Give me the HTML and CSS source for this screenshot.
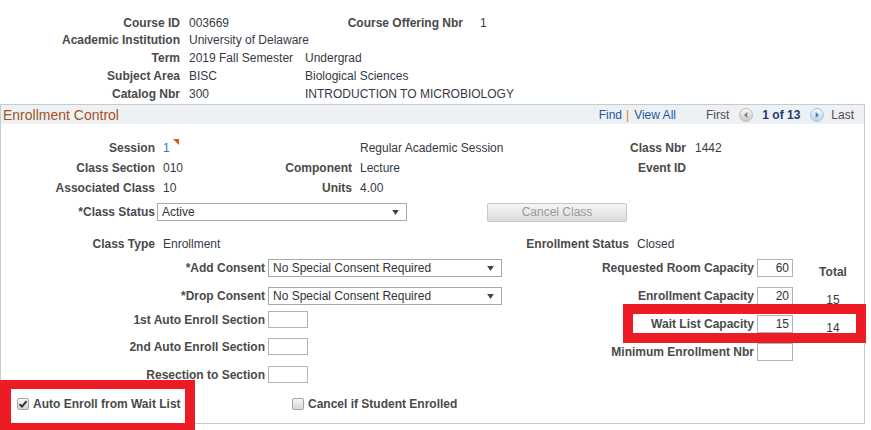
FILE: index.html
```html
<!DOCTYPE html>
<html>
<head>
<meta charset="utf-8">
<title>Enrollment Control</title>
<link rel="stylesheet" href="styles.css">
</head>
<body>
<div class="course">
  <div class="crow"><span class="lbl">Course ID</span><span class="val v1">003669</span><span class="lbl lbl2">Course Offering Nbr</span><span class="val v2">1</span></div>
  <div class="crow"><span class="lbl">Academic Institution</span><span class="val v1">University of Delaware</span></div>
  <div class="crow"><span class="lbl">Term</span><span class="val v1">2019 Fall Semester</span><span class="val">Undergrad</span></div>
  <div class="crow"><span class="lbl">Subject Area</span><span class="val v1">BISC</span><span class="val">Biological Sciences</span></div>
  <div class="crow"><span class="lbl">Catalog Nbr</span><span class="val v1">300</span><span class="val">INTRODUCTION TO MICROBIOLOGY</span></div>
</div>

<section class="panel">
  <div class="phead">
    <span class="ptitle">Enrollment Control</span>
    <nav class="pager">
      <span class="link">Find</span><span class="sep">|</span><span class="link">View All</span>
      <span class="first">First</span>
      <svg class="nav-ic" viewBox="0 0 14 14" width="14" height="14">
        <defs><linearGradient id="g1" x1="0" y1="0" x2="0" y2="1"><stop offset="0" stop-color="#fbfbfb"/><stop offset="1" stop-color="#c9c9c9"/></linearGradient></defs>
        <circle cx="7" cy="7" r="6.4" fill="url(#g1)" stroke="#b9b9b9" stroke-width="1"/>
        <polygon points="8.3,4 5,7 8.3,10" fill="#7d7d7d"/>
      </svg>
      <span class="count">1 of 13</span>
      <svg class="nav-ic" viewBox="0 0 14 14" width="14" height="14">
        <defs><linearGradient id="g2" x1="0" y1="0" x2="0" y2="1"><stop offset="0" stop-color="#f5f9fd"/><stop offset="1" stop-color="#b9d2ea"/></linearGradient></defs>
        <circle cx="7" cy="7" r="6.4" fill="url(#g2)" stroke="#a3bfdc" stroke-width="1"/>
        <polygon points="5.7,4 9,7 5.7,10" fill="#4a82c0"/>
      </svg>
      <span class="last">Last</span>
    </nav>
  </div>

  <div class="pbody">
    <div class="grid3">
      <span class="lbl">Session</span>
      <span class="val sess">1<svg class="flag" viewBox="0 0 6 6" width="6" height="6"><polygon points="0,0 6,0 6,6" fill="#e2531b"/></svg></span>
      <span class="lbl"></span>
      <span class="val">Regular Academic Session</span>
      <span class="lbl">Class Nbr</span>
      <span class="val v6">1442</span>

      <span class="lbl">Class Section</span>
      <span class="val">010</span>
      <span class="lbl">Component</span>
      <span class="val">Lecture</span>
      <span class="lbl">Event ID</span>
      <span class="val v6"></span>

      <span class="lbl">Associated Class</span>
      <span class="val">10</span>
      <span class="lbl">Units</span>
      <span class="val">4.00</span>
      <span class="lbl"></span>
      <span class="val v6"></span>
    </div>

    <div class="statusrow">
      <span class="lbl">*Class Status</span>
      <span class="select status-sel">Active<svg class="arr" viewBox="0 0 8 6" width="7" height="5"><polygon points="0,0 8,0 4,6" fill="#444"/></svg></span>
      <span class="btn">Cancel Class</span>
    </div>

    <div class="typerow">
      <span class="lbl">Class Type</span>
      <span class="val tv">Enrollment</span>
      <span class="lbl lbl-es">Enrollment Status</span>
      <span class="val ev">Closed</span>
    </div>

    <div class="lower">
      <div class="lcol">
        <div class="lrow r-add">
          <span class="lbl">*Add Consent</span>
          <span class="select sel-consent">No Special Consent Required<svg class="arr" viewBox="0 0 8 6" width="7" height="5"><polygon points="0,0 8,0 4,6" fill="#444"/></svg></span>
        </div>
        <div class="lrow r-drop">
          <span class="lbl">*Drop Consent</span>
          <span class="select sel-consent">No Special Consent Required<svg class="arr" viewBox="0 0 8 6" width="7" height="5"><polygon points="0,0 8,0 4,6" fill="#444"/></svg></span>
        </div>
        <div class="lrow sm r-first">
          <span class="lbl">1st Auto Enroll Section</span>
          <span class="input inp-sm"></span>
        </div>
        <div class="lrow sm r-second">
          <span class="lbl">2nd Auto Enroll Section</span>
          <span class="input inp-sm"></span>
        </div>
        <div class="lrow sm r-resec">
          <span class="lbl">Resection to Section</span>
          <span class="input inp-sm"></span>
        </div>
        <div class="cbrow">
          <span class="cb"><svg viewBox="0 0 12 12" width="12" height="12"><path d="M2.6 6.2 L5 8.6 L9.6 3.2" fill="none" stroke="#333" stroke-width="2"/></svg></span>
          <span class="cblbl cbl1">Auto Enroll from Wait List</span>
          <span class="cb cb2"></span>
          <span class="cblbl">Cancel if Student Enrolled</span>
        </div>
      </div>

      <div class="rcol">
        <div class="rrow r-room">
          <span class="lbl">Requested Room Capacity</span>
          <span class="input num">60</span>
          <span class="tot lbl-tot">Total</span>
        </div>
        <div class="rrow">
          <span class="lbl">Enrollment Capacity</span>
          <span class="input num">20</span>
          <span class="tot"><span class="totv">15</span></span>
        </div>
        <div class="rrow">
          <span class="lbl">Wait List Capacity</span>
          <span class="input num">15</span>
          <span class="tot"><span class="totv">14</span></span>
        </div>
        <div class="rrow">
          <span class="lbl">Minimum Enrollment Nbr</span>
          <span class="input num"></span>
          <span class="tot"></span>
        </div>
      </div>
    </div>
  </div>
</section>

<div class="mark mark-auto"></div>
<div class="mark mark-wait"></div>
</body>
</html>
```

FILE: styles.css
```css
* { box-sizing: border-box; }
html, body { margin: 0; padding: 0; overflow: hidden; background: #fff; }
body {
  font-family: "Liberation Sans", Arial, sans-serif;
  font-size: 12px;
  color: #353a45;
  width: 871px;
  height: 430px;
  position: relative;
}
.lbl { font-weight: bold; color: #4a4a4a; text-align: right; white-space: nowrap; }
.val { color: #353a45; white-space: nowrap; }

/* top course summary */
.course { padding-top: 13px; height: 104px; }
.crow { display: flex; height: 18px; line-height: 18px; }
.crow:first-child { line-height: 20px; }
.crow > .lbl { width: 180px; }
.crow .v1 { width: 125px; padding-left: 9px; }
.crow .lbl2 { width: 158px; }
.crow .v2 { padding-left: 17px; }

/* panel */
.panel { width: 865px; height: 320px; border: 1px solid #c5cbd1; }
.phead {
  height: 19px;
  background: #eef1f4;
  display: flex;
  align-items: center;
  justify-content: space-between;
  padding: 0 10px 0 2px;
}
.ptitle { font-size: 14px; color: #a4521c; }
.pager { display: flex; align-items: center; color: #4d4d4d; }
.link { color: #1c58a0; }
.sep { color: #e3842a; margin: 0 5px 0 4px; }
.first { margin-left: 30px; }
.nav-ic { display: block; margin: 0 9px 0 10px; }
.count { font-weight: bold; color: #1f3a6e; }
.last { margin-left: -2px; }

.pbody { padding-top: 14px; }
.grid3 {
  display: grid;
  grid-template-columns: 154px 105px 92px 208px 126px 1fr;
  grid-auto-rows: 20px;
  line-height: 20px;
}
.grid3 .val { padding-left: 8px; }
.grid3 .v6 { padding-left: 9px; }
.sess { color: #3d72b0 !important; }
.flag { vertical-align: top; margin-left: 3px; margin-top: 1px; }

/* controls */
.select {
  position: relative;
  display: flex;
  align-items: center;
  height: 18px;
  border: 1px solid #a9a9a9;
  background: #fff;
  color: #333;
  padding-left: 4px;
  white-space: nowrap;
}
.select .arr { position: absolute; right: 7px; top: 6px; }
.input {
  display: block;
  height: 18px;
  border: 1px solid #b3b3b3;
  background: #fff;
  color: #333;
  line-height: 16px;
}

.statusrow { display: flex; align-items: center; height: 20px; margin-top: 4px; }
.statusrow .lbl { width: 154px; }
.status-sel { width: 250px; margin-left: 2px; }
.btn {
  margin-left: 80px;
  width: 140px;
  height: 19px;
  border: 1px solid #c6c6c6;
  border-radius: 2px;
  background: linear-gradient(#f5f5f5, #dcdcdc);
  color: #9a9a9a;
  display: flex;
  align-items: center;
  justify-content: center;
}

.typerow { display: flex; height: 20px; line-height: 20px; margin-top: 12px; }
.typerow > .lbl { width: 154px; }
.typerow .tv { width: 246px; padding-left: 8px; }
.typerow .lbl-es { width: 228px; }
.typerow .ev { padding-left: 8px; }

.lower { display: grid; grid-template-columns: 509px 1fr; }

.lrow { display: flex; align-items: center; height: 18px; margin-top: 10px; }
.lrow > .lbl { width: 264px; }
.lrow > .select, .lrow > .input { margin-left: 3px; }
.lrow.sm { height: 17px; }
.r-add { margin-top: 5px; }
.r-first { margin-top: 6px; }
.r-resec { margin-top: 11px; }
.sel-consent { width: 234px; }
.inp-sm { width: 40px; height: 17px; }

.cbrow { display: flex; align-items: center; height: 16px; margin-top: 13px; padding-left: 16px; }
.cb {
  display: block;
  width: 12px;
  height: 12px;
  border: 1px solid #a5a5a5;
  border-radius: 2px;
  background: linear-gradient(#f7f7f7, #d6d6d6);
  position: relative;
}
.cb svg { position: absolute; left: -1px; top: -1px; }
.cblbl { font-weight: bold; color: #4a4a4a; margin-left: 4px; white-space: nowrap; }
.cbl1 { width: 147px; }
.cb2 { margin-left: 112px; }

.rrow { display: flex; align-items: center; height: 18px; margin-top: 10px; }
.r-room { margin-top: 5px; }
.rrow > .lbl { width: 244px; }
.num { width: 36px; margin-left: 3px; text-align: right; padding-right: 3px; }
.tot { width: 80px; text-align: center; margin-top: 8px; color: #3a3a3a; }
.totv { color: #3a3a3a; }
.lbl-tot { font-weight: bold; color: #4a4a4a; }

/* red annotation frames over the form */
.mark { position: absolute; border: 10px solid #ed1c24; }
.mark-auto { left: 0; top: 380px; width: 195px; height: 53px; border-top-width: 9px; border-left-width: 11px; }
.mark-wait { left: 623px; top: 304px; width: 243px; height: 39px; }
```
